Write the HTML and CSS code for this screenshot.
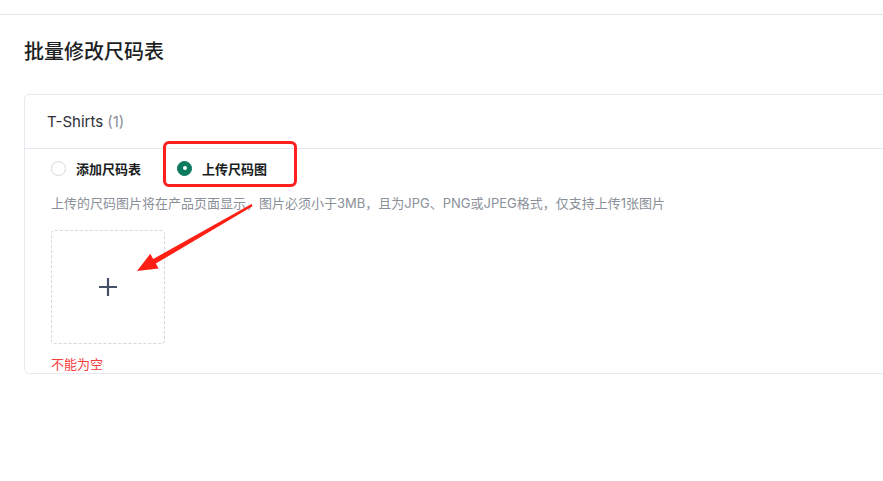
FILE: index.html
```html
<!DOCTYPE html>
<html lang="zh-CN">
<head>
  <meta charset="UTF-8" />
  <title>批量修改尺码表</title>
  <link rel="stylesheet" href="styles.css">
</head>
<body>

  <!-- top bar -->
  <div class="topbar"></div>

  <main class="page">
    <h1 class="title">批量修改尺码表</h1>

    <div class="card">
      <div class="card-head">T-Shirts <span class="count">(1)</span></div>
      <div class="card-body">
        <div class="radio-row">
          <label class="radio">
            <span class="dot"></span>
            <span class="radio-text">添加尺码表</span>
          </label>
          <label class="radio checked">
            <span class="dot"></span>
            <span class="radio-text">上传尺码图</span>
          </label>
        </div>
        <p class="hint">上传的尺码图片将在产品页面显示，图片必须小于3MB，且为JPG、PNG或JPEG格式，仅支持上传1张图片</p>
        <div class="uploader">
          <svg width="20" height="20" viewBox="0 0 20 20">
            <path d="M10 1v18M1 10h18" stroke="#465165" stroke-width="2.2" fill="none"/>
          </svg>
        </div>
        <div class="error">不能为空</div>
      </div>
    </div>

    <!-- annotation overlay -->
    <div class="mark-box"></div>
    <svg class="mark-arrow" width="883" height="481" viewBox="0 0 883 481">
      <polygon fill="#ff2015" points="251.5,204 153.2,259 150.3,253.8 137,271 158.6,268.5 155.8,263.6 252.5,206.2"/>
    </svg>
  </main>

</body>
</html>
```

FILE: styles.css
```css
body {
  margin: 0;
  background: #fff;
  font-family: Inter, "Noto Sans CJK SC", sans-serif;
  color: #1f2329;
  overflow: hidden;
}

.topbar {
  height: 14px;
  border-bottom: 1px solid #e4e4e6;
}

.page {
  position: relative;
  padding-left: 24px;
}

.title {
  margin: 0;
  padding-top: 23px;
  height: 28px;
  line-height: 28px;
  font-size: 20px;
  font-weight: 500;
  color: #1d1f23;
}

.card {
  margin-top: 28px;
  margin-right: -20px;
  border: 1px solid #e8e8f1;
  border-radius: 5px;
}

.card-head {
  height: 53px;
  display: flex;
  align-items: center;
  gap: 4px;
  padding-left: 22px;
  border-bottom: 1px solid #e8e8f1;
  font-size: 15px;
  color: #2b2f36;
}

.count {
  color: #8a8f99;
}

.card-body {
  padding: 9px 26px 0;
}

.radio-row {
  display: flex;
  align-items: center;
  gap: 36px;
  height: 20px;
}

.radio {
  display: flex;
  align-items: center;
  gap: 10px;
  font-size: 13px;
  font-weight: 600;
  color: #1a1d22;
}

.dot {
  width: 15px;
  height: 15px;
  box-sizing: border-box;
  border: 1px solid #d3d6dc;
  border-radius: 50%;
  display: flex;
  align-items: center;
  justify-content: center;
}

.radio.checked .dot {
  background: #0b7a5f;
  border-color: #0b7a5f;
}

.radio.checked .dot::after {
  content: '';
  width: 4px;
  height: 4px;
  border-radius: 50%;
  background: #fff;
}

.hint {
  margin: 15px 0 0;
  line-height: 20px;
  font-size: 13px;
  color: #8b9099;
}

.uploader {
  margin-top: 17px;
  width: 114px;
  height: 114px;
  box-sizing: border-box;
  border: 1px dashed #d6d8dd;
  border-radius: 4px;
  display: flex;
  align-items: center;
  justify-content: center;
}

.error {
  margin-top: 11px;
  line-height: 18px;
  font-size: 13px;
  color: #f53f3f;
}

.mark-box {
  position: absolute;
  left: 163px;
  top: 126px;
  width: 134px;
  height: 46px;
  box-sizing: border-box;
  border: 3px solid #ff1f1f;
  border-radius: 6px;
}

.mark-arrow {
  position: absolute;
  left: 0;
  top: -15px;
  pointer-events: none;
}
```
